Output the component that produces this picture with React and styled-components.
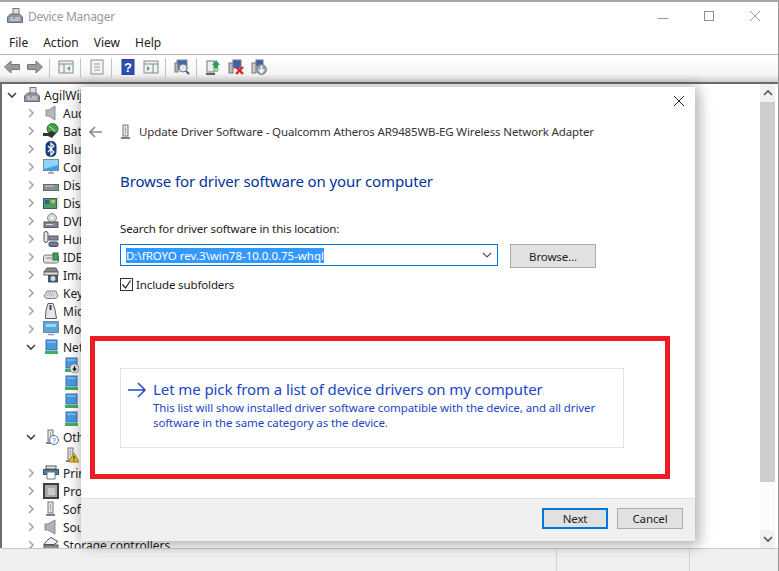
import React from "react";
import styled, { createGlobalStyle } from "styled-components";

const UI = `"Noto Sans", "Open Sans", "Liberation Sans", sans-serif`;

const Global = createGlobalStyle`
  html, body { margin: 0; padding: 0; width: 779px; height: 571px; overflow: hidden; background: #fff; }
  #root { width: 779px; height: 571px; }
  * { box-sizing: border-box; }
`;

const Screen = styled.div`
  position: relative; width: 779px; height: 571px; overflow: hidden; background: #fff;
  display: flex; flex-direction: column; font-family: ${UI}; font-size: 11.5px; letter-spacing: -0.13px; color: #1a1a1a;
  border-top: 2px solid #a8a8a8; border-right: 1px solid #9a9a9a;
`;
const TitleBar = styled.div`
  height: 28px; flex: none; display: flex; align-items: center; padding-left: 7px; color: #9a9a9a;
`;
const TitleText = styled.span` flex: 1; margin-left: 5px; font-size: 12px; letter-spacing: -0.3px; `;
const WinButton = styled.div` width: 46px; height: 28px; display: flex; align-items: center; justify-content: center; `;
const MenuBar = styled.div`
  height: 25px; flex: none; display: flex; align-items: center; padding-left: 9px; gap: 15px;
  border-bottom: 1px solid #b4b4b4; font-size: 12px; letter-spacing: 0; color: #222;
`;
const Toolbar = styled.div`
  height: 29px; flex: none; display: flex; align-items: flex-start; padding-top: 3px;
  background: linear-gradient(#fff 0, #f6f6f6 72%, #e4e4e4 86%, #cfcfcf 100%);
  border-bottom: 2px solid #6a6a6a;
`;
const ToolButton = styled.div` width: 23px; height: 18px; flex: none; display: flex; align-items: center; justify-content: center; `;
const ToolSep = styled.div` width: 1px; height: 20px; flex: none; background: #c4c4c4; margin: 0 4px 0 3px; `;
const Main = styled.div`
  flex: 1; min-height: 0; display: flex; border-left: 2px solid #6d6d6d; overflow: hidden;
`;
const Tree = styled.div` flex: 1; min-width: 0; padding-top: 2px; overflow: hidden; font-size: 12px; letter-spacing: 0; `;
const Row = styled.div`
  height: 18px; display: flex; align-items: center; white-space: nowrap; color: #222;
  padding-left: ${p => (p.$level === 0 ? 5 : 4 + p.$level * 20)}px;
`;
const Chevron = styled.svg` width: 10px; height: 10px; flex: none; `;
const TreeIconBox = styled.svg` width: 16px; height: 16px; flex: none; margin-left: 7px; margin-right: 4px; `;
const Scroll = styled.div` width: 15px; flex: none; display: flex; flex-direction: column; margin-right: 3px; background: #fbfbfb; `;
const ScrollEnd = styled.div` height: 18px; flex: none; display: flex; align-items: center; justify-content: center; background: #f1f1f1; `;
const ScrollThumb = styled.div` height: 380px; flex: none; background: #cdcdcd; `;
const ScrollFill = styled.div` flex: 1; `;
const StatusBar = styled.div`
  height: 23px; flex: none; display: grid; grid-template-columns: 555px 133px 1fr;
  background: #f0f0f0; border-top: 1px solid #c9c9c9; border-left: 2px solid #f0f0f0;
`;
const StatusCell = styled.div` border-right: 1px solid #d4d4d4; &:last-child { border-right: 0; } `;

const Dialog = styled.div`
  position: absolute; left: 81px; top: 85px; width: 614px; height: 454px; background: #fff;
  display: flex; flex-direction: column;
  box-shadow: 0 0 12px 3px rgba(0,0,0,.22), 6px 6px 14px rgba(0,0,0,.12);
`;
const CloseRow = styled.div` height: 20px; flex: none; display: flex; justify-content: flex-end; align-items: flex-end; padding-right: 10px; `;
const HeaderRow = styled.div` height: 25px; margin-top: 12px; flex: none; display: flex; align-items: center; padding-left: 8px; `;
const HeaderIcon = styled.svg` width: 16px; height: 16px; flex: none; margin-left: 15px; margin-right: 5px; `;
const HeaderText = styled.span` color: #333; white-space: nowrap; `;
const Content = styled.div` flex: 1; min-height: 0; padding: 0 71px 0 39px; display: flex; flex-direction: column; `;
const Heading = styled.h1` margin: 27px 0 0; font-size: 15px; letter-spacing: -0.12px; line-height: 20px; font-weight: 400; color: #003399; white-space: nowrap; `;
const FieldLabel = styled.div` margin-top: 30px; line-height: 16px; color: #222; `;
const FieldRow = styled.div` margin-top: 7px; display: flex; align-items: flex-start; gap: 12px; `;
const Combo = styled.div`
  width: 378px; height: 22px; border: 1px solid #0078d7; display: flex; align-items: center; padding: 0 5px; justify-content: space-between;
`;
const Selected = styled.span` background: #3399ff; color: #fff; line-height: 15px; letter-spacing: -0.02px; white-space: nowrap; `;
const PlainButton = styled.div`
  height: ${p => p.$h}px; width: ${p => p.$w}px; display: flex; align-items: center; justify-content: center; flex: none;
  background: #e1e1e1; border: ${p => p.$primary ? "2px solid #0078d7" : "1px solid #adadad"}; color: #222;
`;
const CheckRow = styled.div` margin-top: 8px; display: flex; align-items: center; gap: 3px; height: 16px; `;
const CheckBox = styled.div` width: 13px; height: 13px; border: 1px solid #333; display: flex; align-items: center; justify-content: center; background: #fff; `;
const CommandLink = styled.div`
  margin-top: 76px; width: 504px; height: 80px; border: 1px solid #e3e3e3; display: flex; padding: 10px 0 0 7px; gap: 6px;
`;
const CommandArrow = styled.svg` width: 19px; height: 20px; flex: none; margin-top: 1px; `;
const CommandBody = styled.div` display: flex; flex-direction: column; color: #1c46c4; `;
const CommandTitle = styled.div` font-size: 15px; letter-spacing: -0.09px; line-height: 20px; white-space: nowrap; `;
const CommandDesc = styled.div` font-size: 11.5px; letter-spacing: -0.1px; line-height: 15px; margin-top: 1px; width: 460px; `;
const Footer = styled.div`
  height: 43px; flex: none; background: #f0f0f0; border-top: 1px solid #dfdfdf;
  display: flex; justify-content: flex-end; align-items: flex-start; gap: 9px; padding: 9px 12px 0 0;
`;
const RedFrame = styled.div`
  position: absolute; left: 90px; top: 334px; width: 580px; height: 143px; border: 5px solid #ed1c24;
`;

const Svg = ({ children, w = 16, h = 16 }) => <svg width={w} height={h} viewBox={`0 0 ${w} ${h}`}>{children}</svg>;

const toolIcons = {
  back: <path d="M0.5 8l6.5-6v3.5h8.5v5H7V14z" fill="#9a9a9a" stroke="#777" />,
  forward: <path d="M15.5 8L9 2v3.5H.5v5H9V14z" fill="#9a9a9a" stroke="#777" />,
  pane: <><rect x="1" y="2" width="14" height="12" fill="#eef3ee" stroke="#8a8a8a" /><path d="M1 5h14M6 5v9" stroke="#8a8a8a" /><path d="M12 7l-3 2.5 3 2.5z" fill="#5f9f6f" /></>,
  props: <><rect x="2" y="1" width="12" height="14" fill="#f4f4f4" stroke="#8d8d8d" /><path d="M5 5h6M5 8h6M5 11h6" stroke="#9a9a9a" /></>,
  help: <><rect x="2" y="0" width="12" height="16" fill="#2a4fb0" stroke="#2a3f90" /><text x="8" y="13" fontSize="13" fontWeight="700" textAnchor="middle" fill="#fff" fontFamily="Liberation Sans">?</text></>,
  run: <><rect x="1" y="2" width="14" height="12" fill="#eef3ee" stroke="#8a8a8a" /><path d="M1 5h14M10 5v9" stroke="#8a8a8a" /><path d="M4 7l3 2.5-3 2.5z" fill="#5f9f6f" /></>,
  scan: <><rect x="3" y="1" width="10" height="9" fill="#3f63b5" stroke="#8a8a8a" /><rect x="1" y="4" width="3" height="9" fill="#bbb" stroke="#777" /><circle cx="9" cy="9" r="4" fill="#dfe7f3" stroke="#6a7a90" /><path d="M12 12l3 3" stroke="#556" strokeWidth="2" /></>,
  update: <><rect x="2" y="2" width="7" height="11" fill="#eee" stroke="#777" /><path d="M1 15h9" stroke="#333" strokeWidth="1.5" /><path d="M11 1l4 5h-2v3h-4V6H7z" fill="#2aa052" /><path d="M10 10h4M10 12h3" stroke="#2aa052" /></>,
  remove: <><rect x="5" y="1" width="8" height="8" fill="#3f5fb0" stroke="#778" /><rect x="1" y="4" width="4" height="10" fill="#bbb" stroke="#777" /><path d="M8 8l7 7M15 8l-7 7" stroke="#d3262a" strokeWidth="2.4" /></>,
  install: <><rect x="5" y="1" width="7" height="6" fill="#3f5fb0" stroke="#778" /><rect x="1" y="4" width="4" height="10" fill="#ccc" stroke="#777" /><circle cx="10.5" cy="10.5" r="5" fill="#9aa3ad" stroke="#7c858e" /><path d="M10.5 7v5M8 10.5l2.5 3 2.5-3" stroke="#fff" strokeWidth="1.5" fill="none" /></>,
};

const Net = () => <><rect x="3" y="1" width="11" height="10" fill="#4a9ae0" stroke="#3573b0" /><path d="M4 3h9" stroke="#a8d4f5" /><rect x="2" y="12" width="13" height="3" fill="#3fb05e" /></>;
const Driver = () => <><rect x="5" y="1" width="5" height="11" fill="#e4e4e4" stroke="#777" /><path d="M7.5 3v7" stroke="#aaa" /><path d="M3 14h9" stroke="#555" strokeWidth="1.5" /></>;

const treeIcons = {
  root: <><rect x="6" y="0.5" width="6" height="6" fill="#ddd" stroke="#777" /><path d="M0.5 9l3-3h9l3 3v5.5H.5z" fill="#8d97a3" stroke="#66707a" /><path d="M3 10h3M8 10h5M3 12h10" stroke="#e6e6e6" /></>,
  audio: <path d="M3 5h3l6-4v14l-6-4H3z" fill="#b5b8ba" stroke="#8a8d90" />,
  battery: <><circle cx="9.5" cy="6" r="5.5" fill="#46a04e" stroke="#2c6f38" /><path d="M0 10h5l3-2 5 2-4 5-4-2H0z" fill="#333" /><path d="M6 3l6 5" stroke="#d9efd9" /></>,
  bluetooth: <><rect x="2.5" y="0" width="11" height="16" rx="5" fill="#143d7a" /><path d="M5 5l6 6-3 3V2l3 3-6 6" stroke="#fff" strokeWidth="1.2" fill="none" /></>,
  computer: <><rect x="0.5" y="0.5" width="15" height="11" fill="#37a3e6" stroke="#7a8a98" /><path d="M1 1h14v5L1 10z" fill="#8fd3f7" /><path d="M5 14h6M8 12v2" stroke="#9a9a9a" strokeWidth="1.5" /></>,
  disk: <><rect x="0.5" y="7.5" width="15" height="6" fill="#8a8f94" stroke="#666" /><path d="M2 9h9" stroke="#ccc" /><rect x="12" y="10" width="2" height="2" fill="#3fb05e" /></>,
  display: <><rect x="0.5" y="3.5" width="13" height="10" fill="#4d9a6a" stroke="#3b5f4d" /><rect x="2" y="5" width="4" height="4" fill="#2b5fa8" /><rect x="8" y="5" width="4" height="3" fill="#d6b94c" /><path d="M15 1v12" stroke="#ccc" /></>,
  dvd: <><circle cx="9" cy="5" r="4.5" fill="#d4d6d8" stroke="#8c8f92" /><circle cx="9" cy="5" r="1.3" fill="#fff" /><rect x="1" y="9" width="14" height="5.5" fill="#7f858c" stroke="#555" /><rect x="3" y="11" width="7" height="1" fill="#ddd" /></>,
  hid: <><rect x="1" y="0.5" width="4" height="11" rx="2" fill="#e8e8e8" stroke="#555" /><rect x="6" y="5" width="9" height="4" fill="#889" stroke="#556" /><rect x="6" y="11" width="9" height="4.5" rx="1.5" fill="#6a7a9a" stroke="#445" /></>,
  ide: <><rect x="0.5" y="6" width="15" height="8" rx="2" fill="#dfe3e2" stroke="#777" /><rect x="10" y="4" width="5" height="7" fill="#3fa05e" stroke="#2b6f40" /><path d="M3 9h6" stroke="#888" /></>,
  imaging: <><path d="M1 5l3-4h9l2 4z" fill="#888" stroke="#555" /><rect x="1" y="5" width="14" height="3" fill="#ddd" stroke="#666" /><rect x="5" y="8" width="10" height="7.5" fill="#456" /><circle cx="10" cy="11.5" r="2.5" fill="#cde" /></>,
  keyboard: <><path d="M1 11l3-5h9l2 5-2 2.5H3z" fill="#d9dcdf" stroke="#83878b" /><path d="M5 8h6M4 10h8" stroke="#999" strokeDasharray="1 1" /></>,
  mouse: <><path d="M5 .5h5l2 6 1.5 9h-11L3 7z" fill="#e6e6e6" stroke="#5c5c5c" /><rect x="6.5" y="2" width="2" height="5" fill="#444" /></>,
  monitor: <><rect x="0.5" y="0.5" width="15" height="11" fill="#5aa7db" stroke="#6d8ba3" /><path d="M3 3h10v3H3z" fill="#a5d7f5" /><path d="M5 13.5h6" stroke="#999" strokeWidth="1.5" /></>,
  net: <Net />,
  netDown: <><Net /><circle cx="11.5" cy="11.5" r="4.5" fill="#eee" stroke="#888" /><path d="M11.5 9v4M9.8 11.5l1.7 2 1.7-2" stroke="#222" strokeWidth="1.3" fill="none" /></>,
  other: <><Driver /><circle cx="11" cy="11" r="4.5" fill="#fff" stroke="#4a6fb0" /><text x="11" y="14" fontSize="8" textAnchor="middle" fill="#4a6fb0" fontFamily="Liberation Sans">?</text></>,
  warn: <><Driver /><path d="M11 6l5 9H6z" fill="#f6c525" stroke="#a88a10" /><path d="M11 9v3.5M11 13.5v1" stroke="#222" /></>,
  printer: <><rect x="3" y="1" width="10" height="3" fill="#e6e6e6" stroke="#555" /><rect x="0.5" y="4.5" width="15" height="5" fill="#4b7f9a" stroke="#38556a" /><path d="M4 7h8v7H4z" fill="#fff" stroke="#777" /></>,
  cpu: <><rect x="0" y="0" width="16" height="16" fill="#3f3f3f" /><rect x="2" y="2" width="12" height="12" fill="#a8a8a8" /><rect x="5" y="5" width="7" height="7" fill="#c9c9c9" /></>,
  software: <Driver />,
  sound: <path d="M2 5h3l7-4v14l-7-4H2z" fill="#b0b3b5" stroke="#84878a" />,
  storage: <><path d="M8 0.5l7 4-4 3H1l3-4z" fill="#eee" stroke="#555" /><rect x="1" y="8" width="14" height="5" fill="#8a8f94" stroke="#555" /></>,
};

const rows = [
  [0, "root", "AgilWij", "down"],
  [1, "audio", "Aud", "right"],
  [1, "battery", "Bat", "right"],
  [1, "bluetooth", "Blu", "right"],
  [1, "computer", "Cor", "right"],
  [1, "disk", "Disk", "right"],
  [1, "display", "Disp", "right"],
  [1, "dvd", "DVD", "right"],
  [1, "hid", "Hun", "right"],
  [1, "ide", "IDE", "right"],
  [1, "imaging", "Ima", "right"],
  [1, "keyboard", "Key", "right"],
  [1, "mouse", "Mic", "right"],
  [1, "monitor", "Mon", "right"],
  [1, "net", "Net", "down"],
  [2, "netDown", "", null],
  [2, "net", "", null],
  [2, "net", "", null],
  [2, "net", "", null],
  [1, "other", "Oth", "down"],
  [2, "warn", "", null],
  [1, "printer", "Prin", "right"],
  [1, "cpu", "Pro", "right"],
  [1, "software", "Sof", "right"],
  [1, "sound", "Sou", "right"],
  [1, "storage", "Storage controllers", "right"],
];

const ChevronMark = ({ dir }) => (
  <Chevron viewBox="0 0 10 10">
    {dir === "down" && <path d="M1 3l4 4 4-4" fill="none" stroke="#444" strokeWidth="1.6" />}
    {dir === "right" && <path d="M3 1l4 4-4 4" fill="none" stroke="#a6a6a6" strokeWidth="1.6" />}
  </Chevron>
);

export default function App() {
  return (
    <>
      <Global />
      <Screen>
        <TitleBar>
          <Svg>{treeIcons.root}</Svg>
          <TitleText>Device Manager</TitleText>
          <WinButton><Svg w={12} h={12}><path d="M0.5 8.5h11" stroke="#9a9a9a" /></Svg></WinButton>
          <WinButton><Svg w={12} h={12}><rect x="1.5" y="1.5" width="9" height="9" fill="none" stroke="#8f8f8f" /></Svg></WinButton>
          <WinButton><Svg w={12} h={12}><path d="M1 1l10 10M11 1L1 11" stroke="#a0a0a0" /></Svg></WinButton>
        </TitleBar>
        <MenuBar>
          <span>File</span><span>Action</span><span>View</span><span>Help</span>
        </MenuBar>
        <Toolbar>
          <ToolButton><Svg>{toolIcons.back}</Svg></ToolButton>
          <ToolButton><Svg>{toolIcons.forward}</Svg></ToolButton>
          <ToolSep />
          <ToolButton><Svg>{toolIcons.pane}</Svg></ToolButton>
          <ToolSep />
          <ToolButton><Svg>{toolIcons.props}</Svg></ToolButton>
          <ToolSep />
          <ToolButton><Svg>{toolIcons.help}</Svg></ToolButton>
          <ToolButton><Svg>{toolIcons.run}</Svg></ToolButton>
          <ToolSep />
          <ToolButton><Svg>{toolIcons.scan}</Svg></ToolButton>
          <ToolSep />
          <ToolButton><Svg>{toolIcons.update}</Svg></ToolButton>
          <ToolButton><Svg>{toolIcons.remove}</Svg></ToolButton>
          <ToolButton><Svg>{toolIcons.install}</Svg></ToolButton>
        </Toolbar>
        <Main>
          <Tree>
            {rows.map(([level, icon, label, dir], i) => (
              <Row key={i} $level={level}>
                <ChevronMark dir={dir} />
                <TreeIconBox viewBox="0 0 16 16">{treeIcons[icon]}</TreeIconBox>
                {label && <span>{label}</span>}
              </Row>
            ))}
          </Tree>
          <Scroll>
            <ScrollEnd><Svg w={10} h={8}><path d="M1 6l4-4 4 4" fill="none" stroke="#555" strokeWidth="1.6" /></Svg></ScrollEnd>
            <ScrollThumb />
            <ScrollFill />
            <ScrollEnd><Svg w={10} h={8}><path d="M1 2l4 4 4-4" fill="none" stroke="#555" strokeWidth="1.6" /></Svg></ScrollEnd>
          </Scroll>
        </Main>
        <StatusBar>
          <StatusCell /><StatusCell /><StatusCell />
        </StatusBar>
        <Dialog>
          <CloseRow><Svg w={12} h={12}><path d="M1 1l10 10M11 1L1 11" stroke="#222" /></Svg></CloseRow>
          <HeaderRow>
            <Svg w={14} h={14}><path d="M1 7h12M6 2L1 7l5 5" fill="none" stroke="#8a8a8a" strokeWidth="1.6" /></Svg>
            <HeaderIcon viewBox="0 0 16 16">{treeIcons.software}</HeaderIcon>
            <HeaderText>Update Driver Software - Qualcomm Atheros AR9485WB-EG Wireless Network Adapter</HeaderText>
          </HeaderRow>
          <Content>
            <Heading>Browse for driver software on your computer</Heading>
            <FieldLabel>Search for driver software in this location:</FieldLabel>
            <FieldRow>
              <Combo>
                <Selected>D:\fROYO rev.3\win78-10.0.0.75-whql</Selected>
                <Svg w={10} h={8}><path d="M1 2l4 4 4-4" fill="none" stroke="#555" strokeWidth="1.2" /></Svg>
              </Combo>
              <PlainButton $w={86} $h={24}>Browse...</PlainButton>
            </FieldRow>
            <CheckRow>
              <CheckBox><Svg w={11} h={11}><path d="M1.5 5.5l3 3.5 5-7.5" fill="none" stroke="#222" strokeWidth="1.2" /></Svg></CheckBox>
              <span>Include subfolders</span>
            </CheckRow>
            <CommandLink>
              <CommandArrow viewBox="0 0 19 20"><path d="M0 10h17M10 3l7 7-7 7" fill="none" stroke="#2249c8" strokeWidth="1.5" /></CommandArrow>
              <CommandBody>
                <CommandTitle>Let me pick from a list of device drivers on my computer</CommandTitle>
                <CommandDesc>This list will show installed driver software compatible with the device, and all driver software in the same category as the device.</CommandDesc>
              </CommandBody>
            </CommandLink>
          </Content>
          <Footer>
            <PlainButton $primary $w={66} $h={21}>Next</PlainButton>
            <PlainButton $w={66} $h={21}>Cancel</PlainButton>
          </Footer>
        </Dialog>
        <RedFrame />
      </Screen>
    </>
  );
}
